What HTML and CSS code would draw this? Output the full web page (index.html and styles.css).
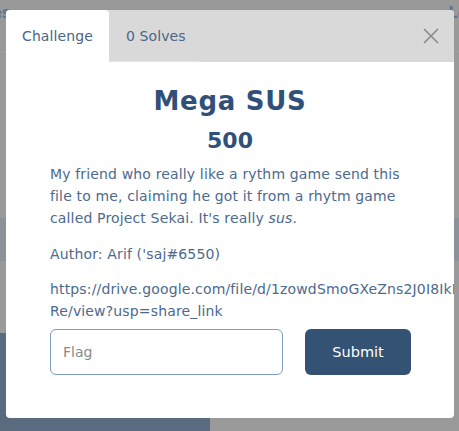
FILE: index.html
```html
<!DOCTYPE html>
<html lang="en">
<head>
<meta charset="utf-8">
<title>Mega SUS</title>
<link rel="stylesheet" href="styles.css">
</head>
<body>
<div class="page">
  <div class="nav">
    <span class="nav-left">Challenges</span>
    <span class="nav-right">Logout</span>
  </div>
  <div class="band"></div>
  <div class="card"></div>
</div>

<div class="modal">
  <div class="modal-head">
    <div class="tab active">Challenge</div>
    <div class="tab">0 Solves</div>
    <button class="close" aria-label="Close">
      <svg width="16" height="16" viewBox="0 0 16 16"><path d="M1 1 L15 15 M15 1 L1 15" stroke="#8a8a8a" stroke-width="1.6" fill="none"/></svg>
    </button>
  </div>
  <div class="modal-body">
    <h1 class="title">Mega SUS</h1>
    <h2 class="points">500</h2>
    <p class="desc">My friend who really like a rythm game send this file to me, claiming he got it from a rhytm game called Project Sekai. It's really <em>sus</em>.</p>
    <p class="desc author">Author: Arif ('saj#6550)</p>
    <p class="desc url">https://drive.google.com/file/d/1zowdSmoGXeZns2J0I8IkMq7Xf9uLw-Re/view?usp=share_link</p>
    <form class="flag-form">
      <input class="flag" type="text" placeholder="Flag">
      <button class="submit" type="button">Submit</button>
    </form>
  </div>
</div>
</body>
</html>
```
FILE: styles.css
```css
html, body {
  margin: 0;
  padding: 0;
}
body {
  width: 459px;
  height: 431px;
  overflow: hidden;
  background: #9a9a9a;
  font-family: "DejaVu Sans", sans-serif;
  position: relative;
}
.page {
  display: flex;
  flex-direction: column;
}
.nav {
  height: 51px;
  display: flex;
  justify-content: space-between;
  align-items: flex-start;
  background: #999999;
  border-bottom: 1px solid #a1a1a1;
  font-size: 15px;
  color: #5e7794;
  font-weight: bold;
}
.nav-left {
  margin-left: -82px;
  margin-top: 4px;
}
.nav-right {
  margin-right: -48px;
  margin-top: 4px;
}
.band {
  margin-top: 166px;
  height: 43px;
  background: #8d9199;
}
.card {
  margin-top: 72px;
  width: 210px;
  height: 110px;
  background: #5a6b7f;
  border-radius: 0 14px 14px 0;
}
.modal {
  position: absolute;
  left: 6px;
  top: 10px;
  width: 448px;
  height: 408px;
  background: #ffffff;
  border-radius: 4px;
  overflow: hidden;
}
.modal-head {
  height: 52px;
  background: #d9d9d9;
  display: flex;
  align-items: stretch;
  position: relative;
}
.tab {
  font-size: 14px;
  color: #4b6689;
  display: flex;
  align-items: center;
  white-space: nowrap;
  letter-spacing: 0.1px;
}
.tab.active {
  background: #ffffff;
  border-radius: 4px 4px 0 0;
  width: 103px;
  box-sizing: border-box;
  padding: 0 0 0 16px;
}
.tab + .tab {
  padding: 0 0 0 17px;
  border-bottom: 1px solid #e3e3e3;
  width: 90px;
  box-sizing: border-box;
}
.close {
  margin-left: auto;
  width: 48px;
  background: none;
  border: 0;
  padding: 0 0 0 2px;
  display: flex;
  align-items: center;
  justify-content: center;
  cursor: pointer;
}
.modal-body {
  padding: 0 0 0 44px;
  width: 370px;
}
.title {
  margin: 22px 0 0 -44px;
  width: 448px;
  text-align: center;
  font-size: 26px;
  letter-spacing: 0.7px;
  line-height: 34px;
  color: #30507a;
  font-weight: bold;
}
.points {
  margin: 8px 0 0 -44px;
  width: 448px;
  text-align: center;
  font-size: 22px;
  line-height: 30px;
  color: #30507a;
  font-weight: bold;
}
.desc {
  margin: 0 0 14px 0;
  font-size: 14px;
  letter-spacing: 0.15px;
  line-height: 22px;
  color: #4c6a8e;
  width: 370px;
}
.points + .desc {
  margin-top: 7px;
}
.author {
  margin-bottom: 13px;
}
.url {
  margin-bottom: 7px;
}
.flag-form {
  display: flex;
  gap: 22px;
  align-items: center;
}
.flag {
  width: 233px;
  height: 46px;
  box-sizing: border-box;
  border: 1px solid #7d9cc4;
  border-radius: 6px;
  padding: 0 12px;
  font-family: "DejaVu Sans", sans-serif;
  font-size: 14px;
  color: #555;
  outline: none;
}
.flag::placeholder {
  color: #8a8a8a;
}
.submit {
  width: 106px;
  height: 46px;
  border: 0;
  border-radius: 6px;
  background: #335274;
  color: #ffffff;
  font-family: "DejaVu Sans", sans-serif;
  font-size: 14.5px;
  cursor: pointer;
}
```
